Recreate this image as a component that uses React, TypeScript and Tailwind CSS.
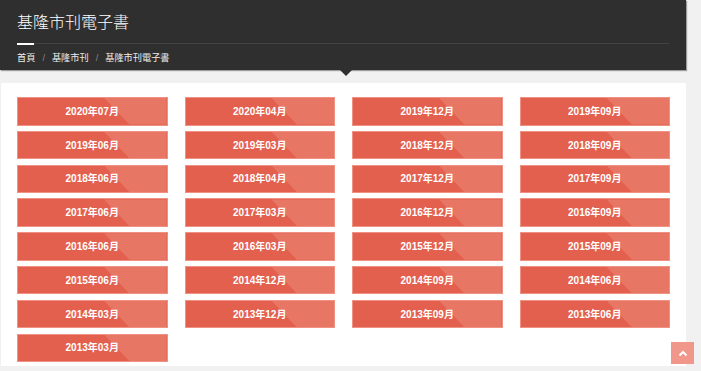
import React from "react";

const issues: string[] = [
  "2020年07月", "2020年04月", "2019年12月", "2019年09月",
  "2019年06月", "2019年03月", "2018年12月", "2018年09月",
  "2018年06月", "2018年04月", "2017年12月", "2017年09月",
  "2017年06月", "2017年03月", "2016年12月", "2016年09月",
  "2016年06月", "2016年03月", "2015年12月", "2015年09月",
  "2015年06月", "2014年12月", "2014年09月", "2014年06月",
  "2014年03月", "2013年12月", "2013年09月", "2013年06月",
  "2013年03月",
];

function IssueButton({ label }: { label: string }) {
  return (
    <a
      href="#"
      className="relative flex h-[28.5px] items-center justify-center overflow-hidden border border-[#ef9283] bg-[#e3604e] text-[10px] font-semibold text-white"
    >
      <span className="absolute inset-0 bg-[#e87665] [clip-path:polygon(58%_0,100%_0,100%_100%,75%_100%)]" />
      <span className="relative">{label}</span>
    </a>
  );
}

export default function App() {
  return (
    <div className="min-h-[371px] bg-[#f1f1f1] font-['Liberation_Sans','Noto_Sans_CJK_TC',sans-serif]">
      <div className="w-[686px]">
        <header className="relative h-[70px] bg-[#2f2f2f] px-[17px] pt-[11px] shadow-[1px_1px_1px_rgba(0,0,0,0.35)]">
          <h1 className="text-[16px] font-light leading-[24px] text-white">基隆市刊電子書</h1>
          <div className="relative mt-[8px] h-px w-[652px] bg-[#444]">
            <span className="absolute left-0 top-[-0.5px] h-[2px] w-[17px] bg-white" />
          </div>
          <nav className="mt-[7px] flex items-center gap-[7px] text-[9.2px] leading-[14px] text-[#ececec]">
            <span>首頁</span>
            <span className="text-[#888]">/</span>
            <span>基隆市刊</span>
            <span className="text-[#888]">/</span>
            <span>基隆市刊電子書</span>
          </nav>
          <span className="absolute left-[340px] top-[70px] h-0 w-0 border-x-[6px] border-t-[6px] border-x-transparent border-t-[#2f2f2f]" />
        </header>

        <main className="ml-px mt-[13px] bg-white pb-[4px] pl-[16px] pr-[16px] pt-[14px]">
          <div className="grid grid-cols-4 gap-x-[17px] gap-y-[5.3px]">
            {issues.map((label) => (
              <IssueButton key={label} label={label} />
            ))}
          </div>
        </main>
      </div>

      <a
        href="#"
        className="fixed bottom-[7px] right-[7px] flex h-[22px] w-[23px] items-center justify-center bg-[#f1968a]"
      >
        <svg width="10" height="7" viewBox="0 0 10 7" fill="none">
          <path d="M1.5 5.5 L5 2 L8.5 5.5" stroke="white" strokeWidth="2" />
        </svg>
      </a>
    </div>
  );
}
